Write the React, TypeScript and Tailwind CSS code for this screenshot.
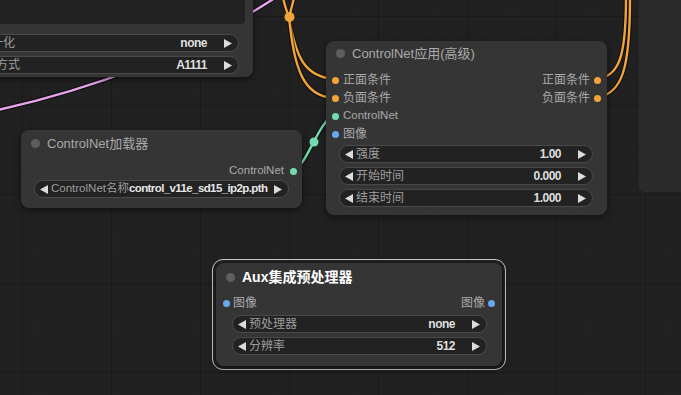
const FONT = "font-['Liberation_Sans','Noto_Sans_CJK_SC',sans-serif]";

function Arrow({ dir }: { dir: "l" | "r" }) {
  return (
    <svg width="8" height="9" viewBox="0 0 8 9" className="shrink-0">
      <path d={dir === "l" ? "M8 0 L0 4.5 L8 9 Z" : "M0 0 L8 4.5 L0 9 Z"} fill="#dcdcdc" />
    </svg>
  );
}

function Widget({ label, value, className = "" }: { label: string; value: string; className?: string }) {
  return (
    <div
      className={`flex h-[18px] items-center whitespace-nowrap rounded-full border border-[#4a4a4a] bg-[#222222] pl-[5px] pr-[6px] ${className}`}
    >
      <Arrow dir="l" />
      <span className="ml-[3px] text-[12px] text-[#9e9e9e]">{label}</span>
      <span className="ml-auto mr-[17px] text-[12px] font-bold tracking-[-0.5px] text-[#dedede]">{value}</span>
      <Arrow dir="r" />
    </div>
  );
}

function Dot({ color }: { color: string }) {
  return <span className={`block h-[7px] w-[7px] shrink-0 rounded-full ${color}`} />;
}

const ORANGE = "bg-[#f2a43a]";
const GREEN = "bg-[#72dcae]";
const BLUE = "bg-[#68a8ee]";

function Title({ text, active = false }: { text: string; active?: boolean }) {
  return (
    <div className="flex items-center gap-[7px] pl-[10px]">
      <span className="block h-[9px] w-[9px] rounded-full bg-[#5e5e5e]" />
      <span className={active ? "text-[14px] font-bold text-white" : "text-[13px] text-[#a9a9a9]"}>{text}</span>
    </div>
  );
}

function Grid() {
  const vx = [22, 111, 200, 289, 378, 467, 556, 645];
  const hy = [16, 105, 194, 283, 372];
  return (
    <svg className="absolute inset-0" width="681" height="395">
      <defs>
        <pattern id="minor" width="8.9" height="8.9" patternUnits="userSpaceOnUse" x="22" y="16">
          <path d="M0.5 0 V8.9 M0 0.5 H8.9" stroke="#1e1e1e" strokeWidth="1" />
        </pattern>
      </defs>
      <rect width="681" height="395" fill="url(#minor)" />
      {vx.map((x) => (
        <line key={x} x1={x + 0.5} y1="0" x2={x + 0.5} y2="395" stroke="#1a1a1a" strokeWidth="1" />
      ))}
      {hy.map((y) => (
        <line key={y} x1="0" y1={y + 0.5} x2="681" y2={y + 0.5} stroke="#1a1a1a" strokeWidth="1" />
      ))}
    </svg>
  );
}

function Link({ d, color }: { d: string; color: string }) {
  return (
    <g fill="none" strokeLinecap="round">
      <path d={d} stroke="#000" strokeOpacity="0.55" strokeWidth="4.5" />
      <path d={d} stroke={color} strokeWidth="2.4" />
    </g>
  );
}

function Links() {
  return (
    <svg className="absolute inset-0" width="681" height="395">
      <Link d="M-30 116 Q150 80 278 -4" color="#eba4ee" />
      <Link d="M283 -2 Q286 10 289 17" color="#f2a43a" />
      <Link d="M294 -2 Q291 10 289 17" color="#f2a43a" />
      <Link d="M289 17 C296 60 306 76 333 79" color="#f2a43a" />
      <Link d="M289 17 C294 70 304 96 333 98" color="#f2a43a" />
      <Link d="M598 79 C618 75 626 60 626 -2" color="#f2a43a" />
      <Link d="M598 98 C622 92 630 70 630 -2" color="#f2a43a" />
      <Link d="M294 170 C305 168 320 120 333 116" color="#72dcae" />
      <circle cx="289.5" cy="17" r="5" fill="#f2a43a" />
      <circle cx="314" cy="142" r="4.5" fill="#72dcae" />
    </svg>
  );
}

export default function App() {
  return (
    <div className={`relative h-[395px] w-[681px] overflow-hidden bg-[#212121] ${FONT}`}>
      <Grid />
      <Links />

      {/* right side panel */}
      <div className="absolute right-0 top-0 h-[192px] w-[42px] rounded-bl-[6px] bg-[#2b2b2b]" />

      {/* top-left node (cut off) */}
      <div className="absolute left-[-40px] top-[-40px] flex h-[117px] w-[293px] flex-col rounded-[8px] bg-[#353535] shadow-[0_2px_6px_rgba(0,0,0,0.5)]">
        <div className="h-[64px] w-[285px] rounded-br-[4px] bg-[#222222]" />
        <div className="mt-[10px] flex flex-col gap-[4px] pr-[14px]">
          <Widget label="归一化" value="none" className="[&>span:nth-of-type(1)]:ml-[5px]" />
          <Widget label="权重方式" value="A1111" className="[&>span:nth-of-type(1)]:ml-[-2px]" />
        </div>
      </div>

      {/* ControlNet加载器 */}
      <div className="absolute left-[21px] top-[130px] flex h-[78px] w-[281px] flex-col rounded-[8px] bg-[#353535] shadow-[0_2px_6px_rgba(0,0,0,0.5)]">
        <div className="flex h-[23px] items-end">
          <Title text="ControlNet加载器" />
        </div>
        <div className="mt-[9px] flex h-[18px] items-center justify-end gap-[6px] pr-[5px] text-[11.5px] text-[#a9a9a9]">
          ControlNet
          <Dot color={GREEN} />
        </div>
        <div className="mx-[13px] flex h-[18px] items-center whitespace-nowrap rounded-full border border-[#4a4a4a] bg-[#222222] pl-[5px] pr-[6px] text-[11.5px]">
          <Arrow dir="l" />
          <span className="ml-[3px] text-[#9e9e9e]">ControlNet名称</span>
          <span className="font-bold tracking-[-0.6px] text-[#e6e6e6]">control_v11e_sd15_ip2p.pth</span>
          <span className="ml-auto" />
          <Arrow dir="r" />
        </div>
      </div>

      {/* ControlNet应用(高级) */}
      <div className="absolute left-[326px] top-[41px] flex h-[174px] w-[281px] flex-col rounded-[8px] bg-[#353535] shadow-[0_2px_6px_rgba(0,0,0,0.5)]">
        <div className="flex h-[22px] items-end">
          <Title text="ControlNet应用(高级)" />
        </div>
        <div className="mt-[8px] flex justify-between pl-[6px] pr-[6px] text-[12px] text-[#a9a9a9]">
          <div className="flex flex-col">
            {[
              ["正面条件", ORANGE],
              ["负面条件", ORANGE],
              ["ControlNet", GREEN],
              ["图像", BLUE],
            ].map(([t, c]) => (
              <div key={t} className="flex h-[18px] items-center gap-[4px]">
                <Dot color={c} />
                <span className={t === "ControlNet" ? "text-[11.5px]" : ""}>{t}</span>
              </div>
            ))}
          </div>
          <div className="flex flex-col">
            {["正面条件", "负面条件"].map((t) => (
              <div key={t} className="flex h-[18px] items-center gap-[4px]">
                {t}
                <Dot color={ORANGE} />
              </div>
            ))}
          </div>
        </div>
        <div className="ml-[13px] mr-[14px] mt-[2px] flex flex-col gap-[4px]">
          <Widget label="强度" value="1.00" />
          <Widget label="开始时间" value="0.000" />
          <Widget label="结束时间" value="1.000" />
        </div>
      </div>

      {/* Aux集成预处理器 (selected) */}
      <div className="absolute left-[212px] top-[259px] h-[111px] w-[294px] rounded-[11px] border border-[#c8c8c8] p-[3px]">
        <div className="flex h-full flex-col rounded-[8px] bg-[#353535] shadow-[0_2px_6px_rgba(0,0,0,0.5)]">
          <div className="flex h-[25px] items-end">
            <Title text="Aux集成预处理器" active />
          </div>
          <div className="mt-[6px] flex h-[18px] items-center justify-between px-[7px] text-[12px] text-[#a9a9a9]">
            <div className="flex items-center gap-[3px]">
              <Dot color={BLUE} />
              图像
            </div>
            <div className="flex items-center gap-[3px]">
              图像
              <Dot color={BLUE} />
            </div>
          </div>
          <div className="ml-[16px] mr-[15px] mt-[3px] flex flex-col gap-[4px]">
            <Widget label="预处理器" value="none" />
            <Widget label="分辨率" value="512" />
          </div>
        </div>
      </div>
    </div>
  );
}
